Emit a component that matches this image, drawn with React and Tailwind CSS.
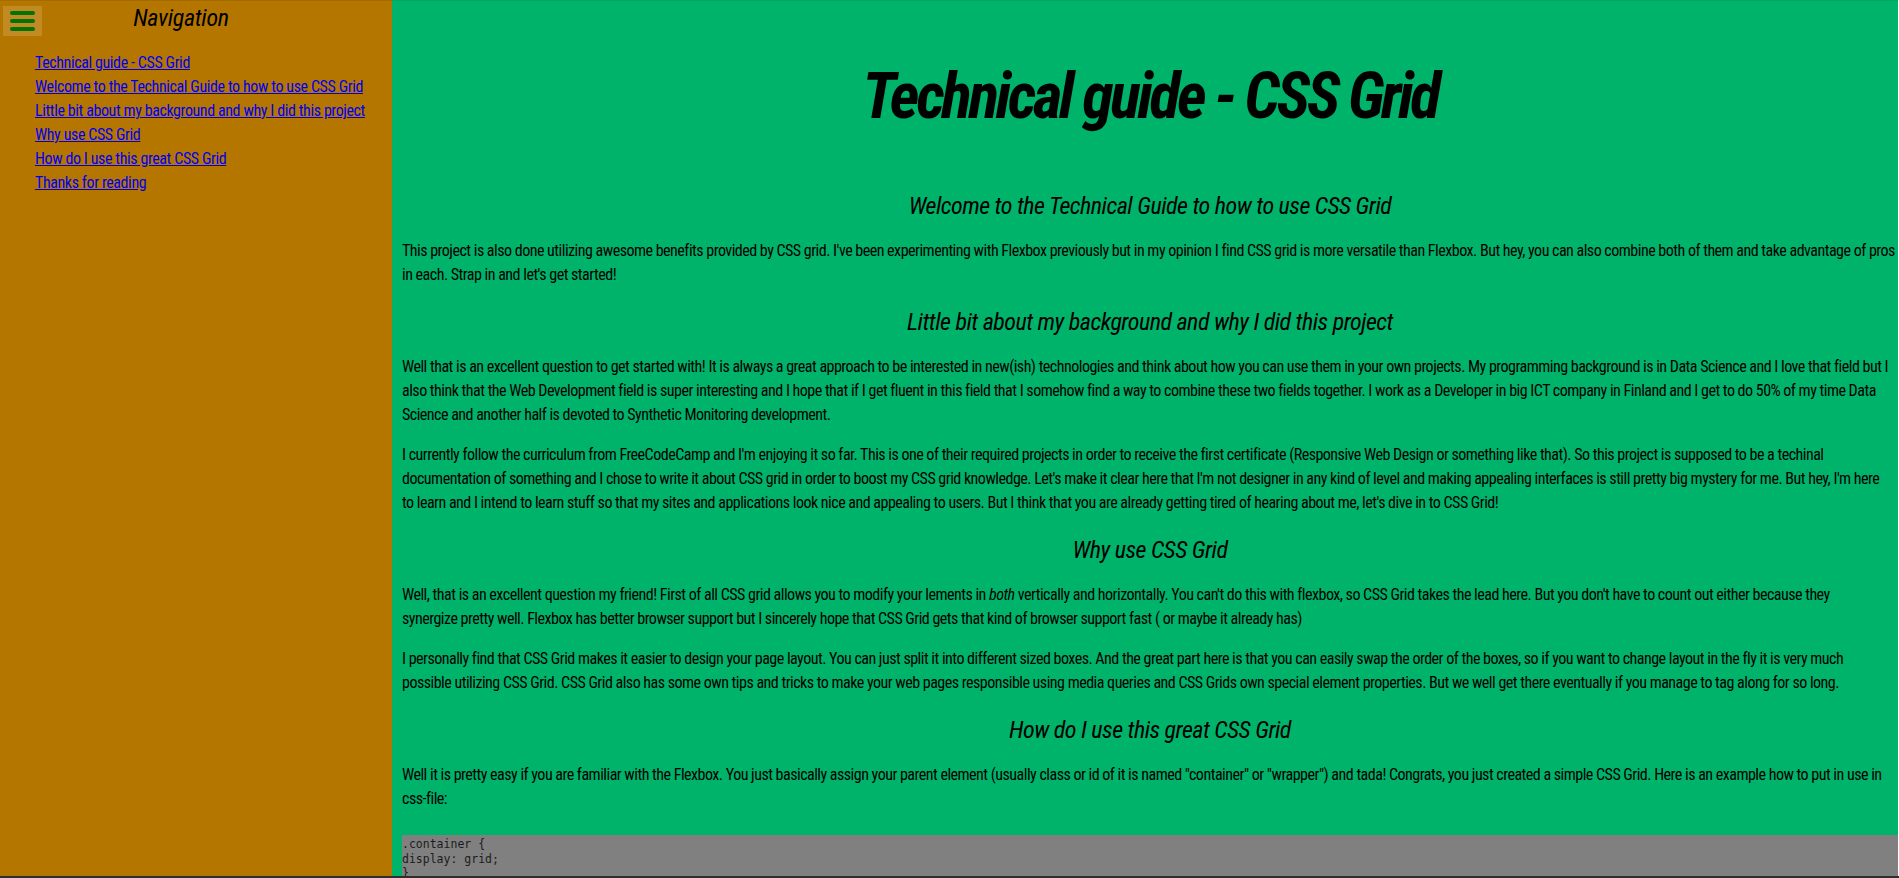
import React from "react";

const navLinks = [
  "Technical guide - CSS Grid",
  "Welcome to the Technical Guide to how to use CSS Grid",
  "Little bit about my background and why I did this project",
  "Why use CSS Grid",
  "How do I use this great CSS Grid",
  "Thanks for reading",
];

function P({ children }) {
  return (
    <p className="my-4 text-[16px] leading-[24px] tracking-[-0.5px] text-black whitespace-nowrap">
      {children}
    </p>
  );
}

function H2({ children }) {
  return (
    <h2 className="mt-[19px] mb-[17px] text-center text-[24px] leading-[32px] italic font-normal tracking-[-0.5px] text-black">
      {children}
    </h2>
  );
}

export default function App() {
  return (
    <div className="h-[878px] flex flex-col bg-white overflow-hidden font-['Roboto_Condensed','Liberation_Sans_Narrow','DejaVu_Sans_Condensed',sans-serif]">
      <div className="flex-1 flex min-h-0">
        <aside className="w-[392px] shrink-0 bg-[#b57600] border-t border-[#a56b00]">
          <div className="flex items-start">
            <button className="ml-[3px] mt-[5px] w-[39px] h-[30px] bg-[#c28a22] flex flex-col items-center justify-center gap-[4px]">
              <span className="block w-[25px] h-[4px] rounded-full bg-[#007300]" />
              <span className="block w-[25px] h-[4px] rounded-full bg-[#007300]" />
              <span className="block w-[25px] h-[4px] rounded-full bg-[#007300]" />
            </button>
            <h2 className="flex-1 pr-[72px] text-center text-[24px] leading-[34px] italic font-normal tracking-[-0.3px] text-black">
              Navigation
            </h2>
          </div>
          <ul className="mt-[15px] pl-[35px] flex flex-col">
            {navLinks.map((l) => (
              <li key={l} className="text-[16px] leading-[24px] tracking-[-0.4px]">
                <a href="#" className="text-[#0000ee] underline">
                  {l}
                </a>
              </li>
            ))}
          </ul>
        </aside>
        <main className="flex-1 min-w-0 mr-[1px] bg-[#00b36b] border-t border-[#00a562] pl-[10px] overflow-hidden">
          <h1 className="mt-[56px] mb-[53px] text-center text-[64px] leading-[80px] italic font-bold tracking-[-3.4px] text-black">
            Technical guide - CSS Grid
          </h1>
          <H2>Welcome to the Technical Guide to how to use CSS Grid</H2>
          <P>
            This project is also done utilizing awesome benefits provided by CSS grid. I've been experimenting with Flexbox previously but in my opinion I find CSS grid is more versatile than Flexbox. But hey, you can also combine both of them and take advantage of pros
            <br />
            in each. Strap in and let's get started!
          </P>
          <H2>Little bit about my background and why I did this project</H2>
          <P>
            Well that is an excellent question to get started with! It is always a great approach to be interested in new(ish) technologies and think about how you can use them in your own projects. My programming background is in Data Science and I love that field but I
            <br />
            also think that the Web Development field is super interesting and I hope that if I get fluent in this field that I somehow find a way to combine these two fields together. I work as a Developer in big ICT company in Finland and I get to do 50% of my time Data
            <br />
            Science and another half is devoted to Synthetic Monitoring development.
          </P>
          <P>
            I currently follow the curriculum from FreeCodeCamp and I'm enjoying it so far. This is one of their required projects in order to receive the first certificate (Responsive Web Design or something like that). So this project is supposed to be a techinal
            <br />
            documentation of something and I chose to write it about CSS grid in order to boost my CSS grid knowledge. Let's make it clear here that I'm not designer in any kind of level and making appealing interfaces is still pretty big mystery for me. But hey, I'm here
            <br />
            to learn and I intend to learn stuff so that my sites and applications look nice and appealing to users. But I think that you are already getting tired of hearing about me, let's dive in to CSS Grid!
          </P>
          <H2>Why use CSS Grid</H2>
          <P>
            Well, that is an excellent question my friend! First of all CSS grid allows you to modify your lements in <em>both</em> vertically and horizontally. You can't do this with flexbox, so CSS Grid takes the lead here. But you don't have to count out either because they
            <br />
            synergize pretty well. Flexbox has better browser support but I sincerely hope that CSS Grid gets that kind of browser support fast ( or maybe it already has)
          </P>
          <P>
            I personally find that CSS Grid makes it easier to design your page layout. You can just split it into different sized boxes. And the great part here is that you can easily swap the order of the boxes, so if you want to change layout in the fly it is very much
            <br />
            possible utilizing CSS Grid. CSS Grid also has some own tips and tricks to make your web pages responsible using media queries and CSS Grids own special element properties. But we well get there eventually if you manage to tag along for so long.
          </P>
          <H2>How do I use this great CSS Grid</H2>
          <P>
            Well it is pretty easy if you are familiar with the Flexbox. You just basically assign your parent element (usually class or id of it is named "container" or "wrapper") and tada! Congrats, you just created a simple CSS Grid. Here is an example how to put in use in
            <br />
            css-file:
          </P>
          <pre className="mt-[24px] pt-[2px] pb-[40px] bg-[#808080] text-[#1c1c1c] font-['DejaVu_Sans_Mono','Liberation_Mono',monospace] text-[11.5px] leading-[14.5px]">
{`.container {
display: grid;
}`}
          </pre>
        </main>
      </div>
      <div className="h-[2px] shrink-0 bg-[#2e2e2e]" />
    </div>
  );
}
